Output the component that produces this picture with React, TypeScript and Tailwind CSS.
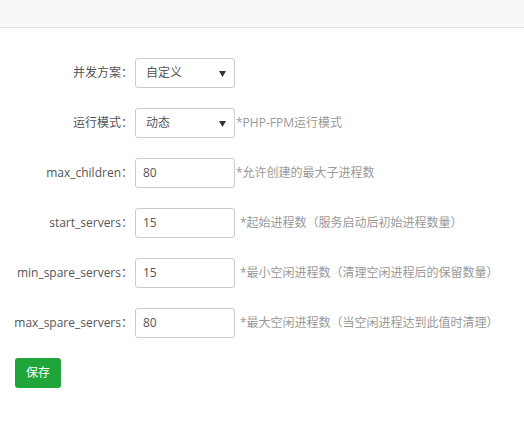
import React from "react";

const font = { fontFamily: '"Open Sans", "Noto Sans CJK SC", sans-serif' };

function Label({ children }: { children: React.ReactNode }) {
  return (
    <div className="w-[135px] shrink-0 pr-[2px] text-right text-[12px] text-[#555]">{children}</div>
  );
}

function Select({ value }: { value: string }) {
  return (
    <div className="flex h-[30px] w-[100px] shrink-0 items-center justify-between rounded-[3px] border border-[#ccc] bg-white pl-[10px] pr-[8px] text-[12px] text-[#555]">
      <span>{value}</span>
      <svg width="7" height="6" viewBox="0 0 7 6" className="mt-[1px]">
        <polygon points="0,0 7,0 3.5,6" fill="#333" />
      </svg>
    </div>
  );
}

function Input({ value }: { value: string }) {
  return (
    <div className="flex h-[30px] w-[100px] shrink-0 items-center rounded-[3px] border border-[#ccc] bg-white pl-[7px] text-[12px] text-[#555]">
      {value}
    </div>
  );
}

function Hint({ children, wide }: { children: React.ReactNode; wide?: boolean }) {
  return (
    <span className={`${wide ? "ml-[5px]" : "ml-[1px]"} text-[12px] text-[#999]`}>{children}</span>
  );
}

export default function App() {
  const rows: { label: string; value: string; hint: string; wide: boolean }[] = [
    { label: "max_children：", value: "80", hint: "*允许创建的最大子进程数", wide: false },
    { label: "start_servers：", value: "15", hint: "*起始进程数（服务启动后初始进程数量）", wide: true },
    { label: "min_spare_servers：", value: "15", hint: "*最小空闲进程数（清理空闲进程后的保留数量）", wide: true },
    { label: "max_spare_servers：", value: "80", hint: "*最大空闲进程数（当空闲进程达到此值时清理）", wide: true },
  ];
  return (
    <div className="h-[424px] w-[524px] overflow-hidden bg-white" style={font}>
      <div className="h-[28px] border-b border-[#e5e5e5] bg-[#f8f8f8]" />
      <div className="flex flex-col gap-[20px] pt-[30px]">
        <div className="flex h-[30px] items-center">
          <Label>并发方案：</Label>
          <Select value="自定义" />
        </div>
        <div className="flex h-[30px] items-center">
          <Label>运行模式：</Label>
          <Select value="动态" />
          <Hint>*PHP-FPM运行模式</Hint>
        </div>
        {rows.map((r) => (
          <div key={r.label} className="flex h-[30px] items-center">
            <Label>{r.label}</Label>
            <Input value={r.value} />
            <Hint wide={r.wide}>{r.hint}</Hint>
          </div>
        ))}
        <div className="pl-[15px]">
          <button className="flex h-[30px] w-[46px] items-center justify-center rounded-[3px] bg-[#20a53a] text-[12px] text-white">
            保存
          </button>
        </div>
      </div>
    </div>
  );
}
